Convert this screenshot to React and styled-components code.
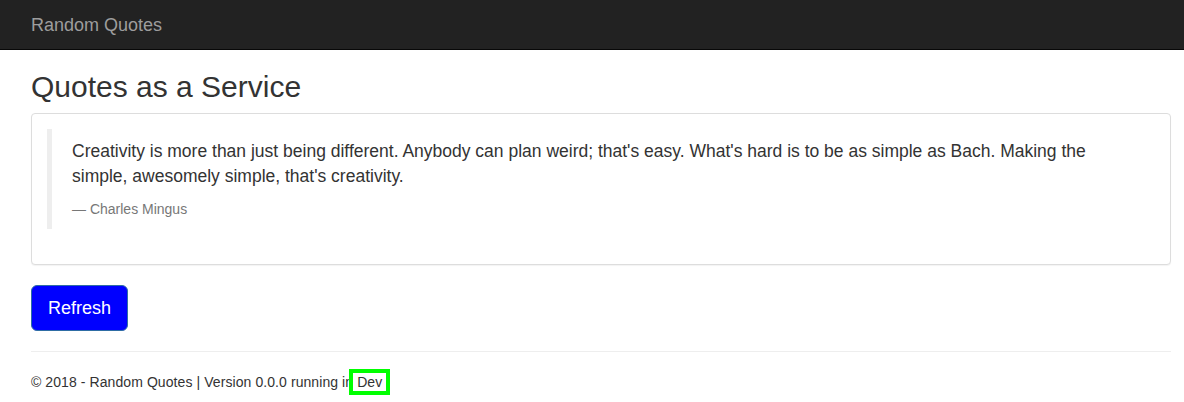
import React from 'react'
import styled, { createGlobalStyle } from 'styled-components'

const GlobalStyle = createGlobalStyle`
  * {
    box-sizing: border-box;
  }
  body {
    margin: 0;
    font-family: "Liberation Sans", Arial, Helvetica, sans-serif;
    font-size: 14px;
    line-height: 1.42857143;
    color: #333;
    background: #fff;
  }
`

const Navbar = styled.nav`
  height: 50px;
  background-color: #222;
  border-bottom: 1px solid #080808;
`

const Container = styled.div`
  width: 1171px;
  padding-left: 31px;
`

const Brand = styled.a`
  display: block;
  padding: 15px 0 14px;
  font-size: 18px;
  line-height: 20px;
  color: #9d9d9d;
  text-decoration: none;
`

const Title = styled.h2`
  margin: 20px 0 10px;
  font-size: 30px;
  font-weight: 500;
  line-height: 1.1;
  color: #333;
`

const Panel = styled.div`
  margin-bottom: 20px;
  border: 1px solid #ddd;
  border-radius: 4px;
  box-shadow: 0 1px 1px rgba(0, 0, 0, 0.05);
  background: #fff;
`

const PanelBody = styled.div`
  padding: 15px;
`

const Quote = styled.blockquote`
  margin: 0 0 20px;
  padding: 10px 20px;
  font-size: 17.5px;
  border-left: 5px solid #eee;

  p {
    margin: 0 0 10px;
  }
`

const Cite = styled.footer`
  display: block;
  font-size: 80%;
  line-height: 1.42857143;
  color: #777;

  &::before {
    content: '\\2014 \\00A0';
  }
`

const Button = styled.button`
  display: inline-block;
  padding: 10px 16px;
  font-family: inherit;
  font-size: 18px;
  line-height: 1.3333333;
  color: #fff;
  background-color: #00f;
  border: 1px solid #2e6da4;
  border-radius: 6px;
  cursor: pointer;
`

const Rule = styled.hr`
  margin: 20px 0;
  border: 0;
  border-top: 1px solid #eee;
`

const Footer = styled.footer`
  p {
    margin: 0 0 10px;
    letter-spacing: 0.08px;
  }
`

const Env = styled.span`
  padding: 0 3px;
  margin: 0 -3px;
  outline: 4px solid #00ff00;
  outline-offset: 1px;
`

const App = () => {
  return (
    <>
      <GlobalStyle />
      <Navbar>
        <Container>
          <Brand href="#">Random Quotes</Brand>
        </Container>
      </Navbar>
      <Container>
        <Title>Quotes as a Service</Title>
        <Panel>
          <PanelBody>
            <Quote>
              <p>
                Creativity is more than just being different. Anybody can plan weird; that's easy.
                What's hard is to be as simple as Bach. Making the simple, awesomely simple,
                that's creativity.
              </p>
              <Cite>Charles Mingus</Cite>
            </Quote>
          </PanelBody>
        </Panel>
        <Button>Refresh</Button>
        <Rule />
        <Footer>
          <p>
            © 2018 - Random Quotes | Version 0.0.0 running in <Env>Dev</Env>
          </p>
        </Footer>
      </Container>
    </>
  )
}

export default App
